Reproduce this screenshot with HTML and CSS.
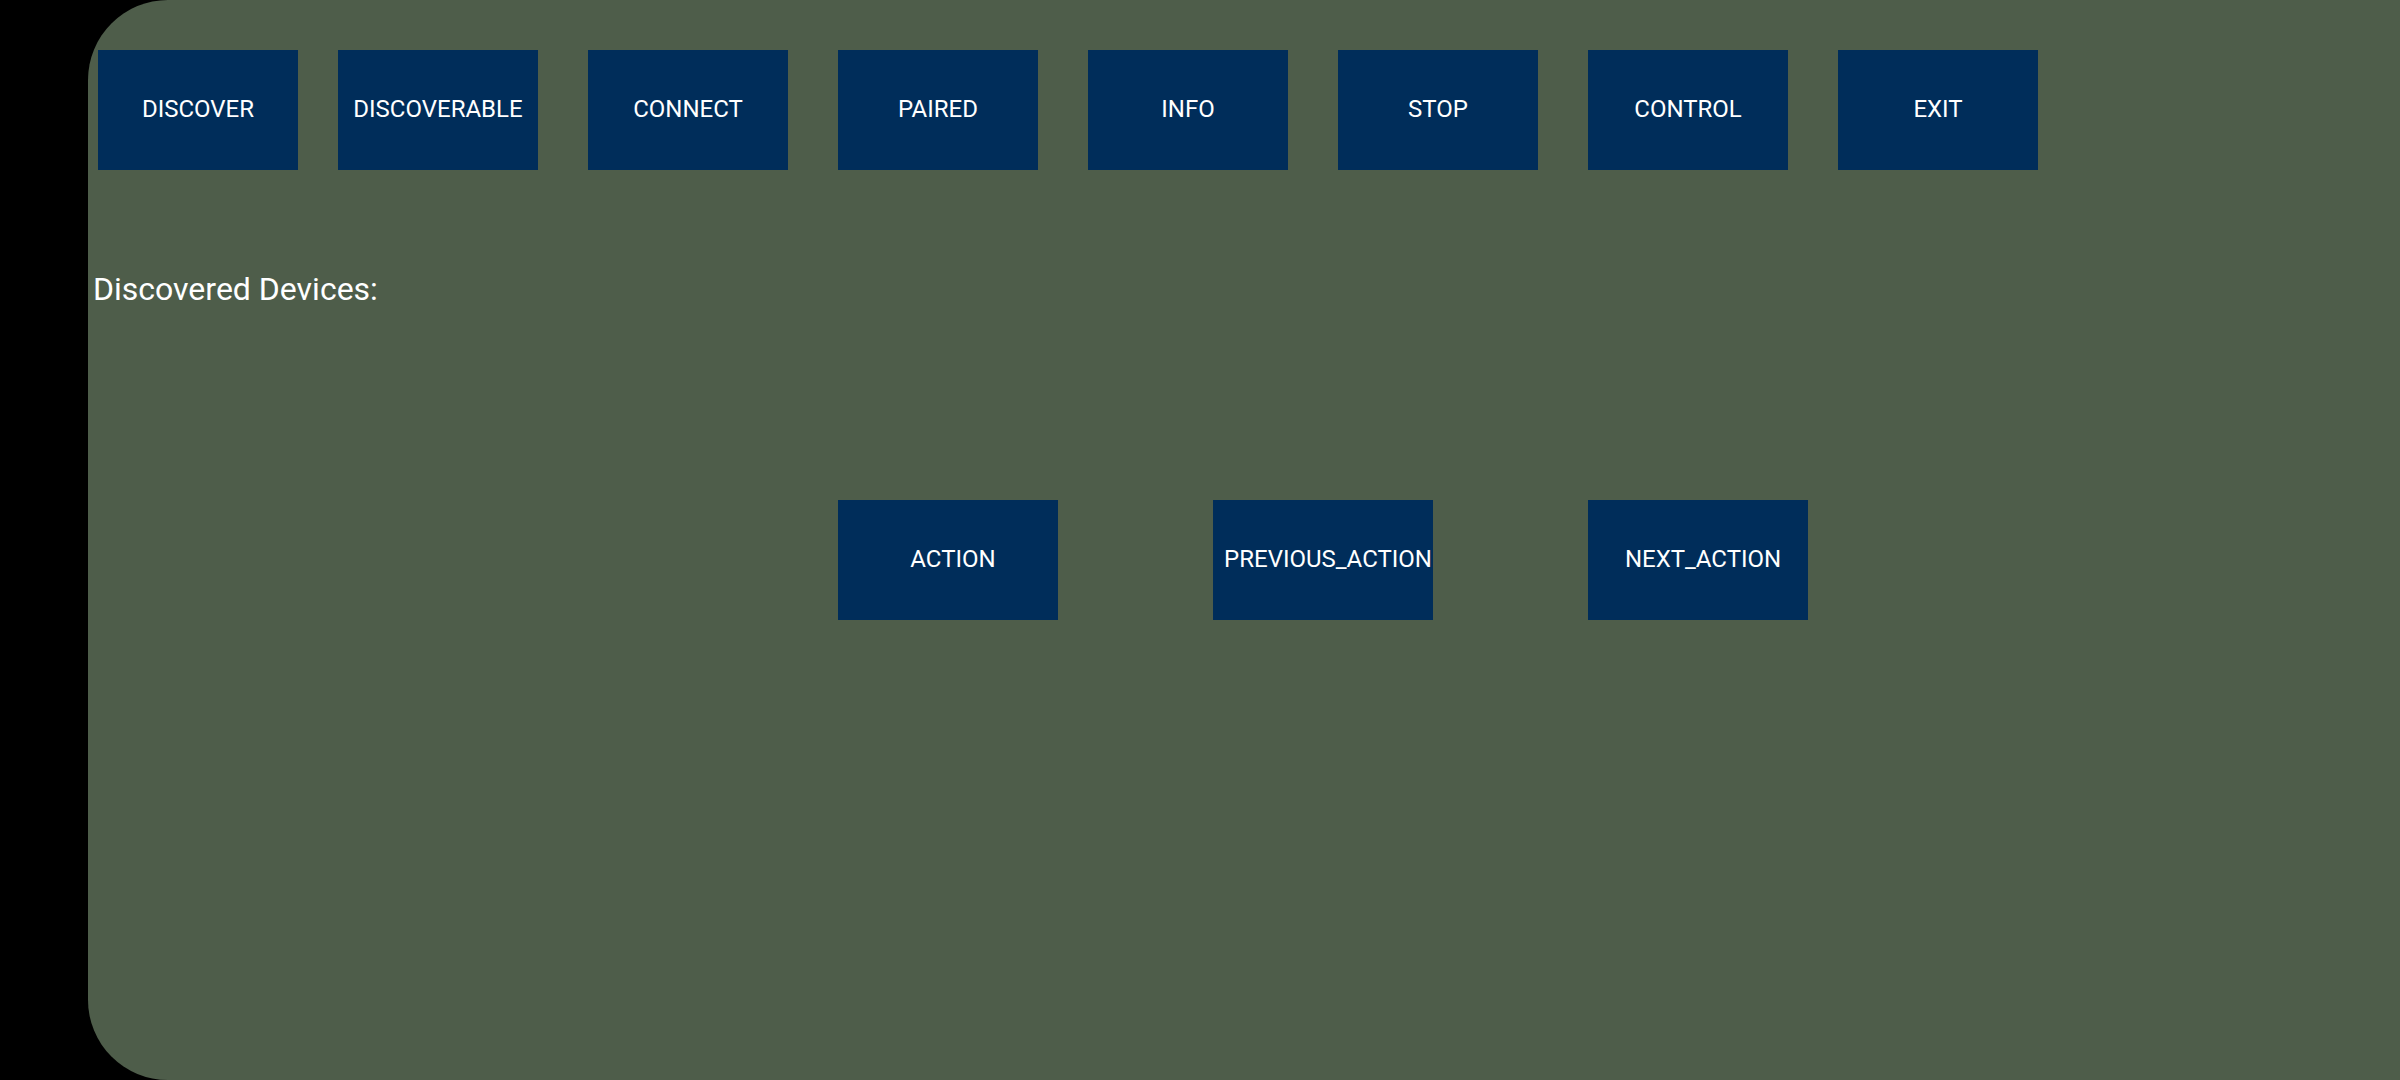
FILE: index.html
```html
<!DOCTYPE html>
<html lang="en">
<head>
<meta charset="utf-8">
<title>Bluetooth Control</title>
<link rel="stylesheet" href="styles.css">
</head>
<body>
<main class="screen">
  <nav class="toolbar">
    <button class="btn btn-first" type="button">DISCOVER</button>
    <button class="btn" type="button">DISCOVERABLE</button>
    <button class="btn" type="button">CONNECT</button>
    <button class="btn" type="button">PAIRED</button>
    <button class="btn" type="button">INFO</button>
    <button class="btn" type="button">STOP</button>
    <button class="btn" type="button">CONTROL</button>
    <button class="btn" type="button">EXIT</button>
  </nav>
  <h1 class="heading">Discovered Devices:</h1>
  <div class="actions">
    <button class="btn btn-wide" type="button">ACTION</button>
    <button class="btn btn-wide" type="button">PREVIOUS_ACTION</button>
    <button class="btn btn-wide" type="button">NEXT_ACTION</button>
  </div>
</main>
</body>
</html>
```
FILE: styles.css
```css
* {
  box-sizing: border-box;
}

body {
  margin: 0;
  background: #000;
  color: #fff;
  font-family: Roboto, "Liberation Sans", sans-serif;
}

.screen {
  min-height: 100vh;
  margin-left: 88px;
  padding-top: 50px;
  border-radius: 80px 0 0 80px;
  background: #4e5d4a;
}

.toolbar {
  display: flex;
  gap: 50px;
  padding-left: 10px;
}

.btn {
  flex: none;
  width: 200px;
  height: 120px;
  padding: 0 0 2px;
  border: 0;
  border-radius: 0;
  background: #002d5a;
  color: inherit;
  font: 400 24px/28px Roboto, "Liberation Sans", sans-serif;
  white-space: nowrap;
}

.btn-first {
  margin-right: -10px;
}

.heading {
  margin: 99px 0 0;
  padding-left: 5px;
  font-size: 32px;
  font-weight: 400;
  line-height: 40px;
}

.actions {
  display: flex;
  gap: 155px;
  margin-top: 191px;
  padding-left: 750px;
}

.btn-wide {
  width: 220px;
  padding-left: 10px;
}
```
